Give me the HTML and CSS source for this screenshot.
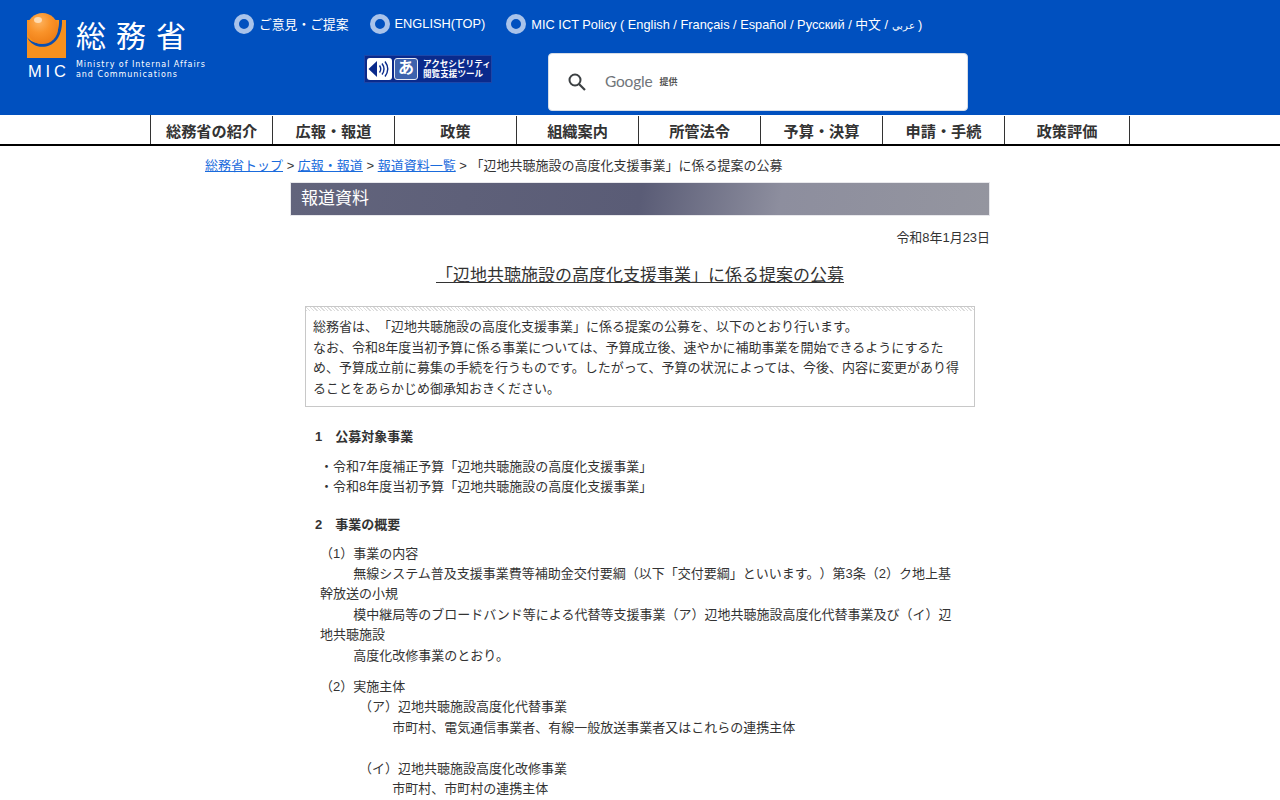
FILE: index.html
```html
<!DOCTYPE html>
<html lang="ja">
<head>
<meta charset="utf-8">
<title>総務省</title>
<link rel="stylesheet" href="styles.css">
</head>
<body>
<header class="site-header">
  <a class="logo" href="#">
    <svg class="logo-mark" width="40" height="46" viewBox="0 0 40 46">
      <defs>
        <radialGradient id="ball" cx="0.4" cy="0.28" r="0.8">
          <stop offset="0" stop-color="#fdb35f"/>
          <stop offset="0.45" stop-color="#f9932a"/>
          <stop offset="1" stop-color="#ec7a12"/>
        </radialGradient>
      </defs>
      <rect x="0" y="7" width="39" height="38" fill="#f7911e"/>
      <path d="M0 24C7 40 36 38 35 7L32 7C33 32 9 36 0 24Z" fill="#0b4fb0"/>
      <circle cx="15.500" cy="15.500" r="15.500" fill="url(#ball)"/>
      <ellipse cx="11" cy="7" rx="4" ry="3" fill="#ffe6c8" opacity="0.8"/>
    </svg>
    <span class="logo-kanji">総務省</span>
    <span class="logo-mic">MIC</span>
    <span class="logo-en">Ministry of Internal Affairs<br>and Communications</span>
  </a>
  <div class="header-right">
    <ul class="top-links">
      <li><a href="#"><span>ご意見・ご提案</span></a></li>
      <li><a href="#"><span>ENGLISH(TOP)</span></a></li>
      <li><a href="#"><span>MIC ICT Policy ( English / Français / Español / Русский / 中文 / <span class="arabic">عربي</span> )</span></a></li>
    </ul>
    <div class="tools">
      <a class="a11y" href="#">
        <svg class="a11y-icon" width="25" height="22" viewBox="0 0 25 22">
          <rect width="25" height="22" rx="3" fill="#fff"/>
          <path d="M1.500 11L10 3v16z" fill="#0a2a8c"/>
          <path d="M12.500 7.500q2.500 3.500 0 7M15 5.500q4 5.500 0 11M18 3.500q5.500 7.500 0 15" fill="none" stroke="#0a2a8c" stroke-width="1.400"/>
        </svg>
        <span class="a11y-kana">あ</span>
        <span class="a11y-text">アクセシビリティ<br>閲覧支援ツール</span>
      </a>
      <div class="search">
        <svg class="search-icon" width="20" height="20" viewBox="0 0 20 20">
          <circle cx="8" cy="8" r="5.500" fill="none" stroke="#3c4043" stroke-width="2"/>
          <path d="M12 12l6 6" stroke="#3c4043" stroke-width="2.200"/>
        </svg>
        <span class="google">Google</span>
        <span class="provided">提供</span>
      </div>
    </div>
  </div>
</header>
<nav class="global-nav">
  <ul class="nav-list">
    <li>総務省の紹介</li>
    <li>広報・報道</li>
    <li>政策</li>
    <li>組織案内</li>
    <li>所管法令</li>
    <li>予算・決算</li>
    <li>申請・手続</li>
    <li class="nav-last">政策評価</li>
  </ul>
</nav>
<p class="breadcrumb"><a href="#">総務省トップ</a> &gt; <a href="#">広報・報道</a> &gt; <a href="#">報道資料一覧</a> &gt; 「辺地共聴施設の高度化支援事業」に係る提案の公募</p>
<main class="main">
  <h1 class="band">報道資料</h1>
  <p class="date">令和8年1月23日</p>
  <h2 class="title">「辺地共聴施設の高度化支援事業」に係る提案の公募</h2>
  <div class="lead">
    <p>総務省は、「辺地共聴施設の高度化支援事業」に係る提案の公募を、以下のとおり行います。<br>なお、令和8年度当初予算に係る事業については、予算成立後、速やかに補助事業を開始できるようにするため、予算成立前に募集の手続を行うものです。したがって、予算の状況によっては、今後、内容に変更があり得ることをあらかじめ御承知おきください。</p>
  </div>
  <h3 class="section">1　公募対象事業</h3>
  <p class="body">・令和7年度補正予算「辺地共聴施設の高度化支援事業」<br>・令和8年度当初予算「辺地共聴施設の高度化支援事業」</p>
  <h3 class="section">2　事業の概要</h3>
  <p class="body body-tight">（1）事業の内容<br>　　&nbsp;&nbsp;無線システム普及支援事業費等補助金交付要綱（以下「交付要綱」といいます。）第3条（2）ク地上基幹放送の小規<br>　　&nbsp;&nbsp;模中継局等のブロードバンド等による代替等支援事業（ア）辺地共聴施設高度化代替事業及び（イ）辺地共聴施設<br>　　&nbsp;&nbsp;高度化改修事業のとおり。</p>
  <p class="body">（2）実施主体</p>
  <p class="body sub">（ア）辺地共聴施設高度化代替事業<br>　　&nbsp;&nbsp;市町村、電気通信事業者、有線一般放送事業者又はこれらの連携主体<br><br>（イ）辺地共聴施設高度化改修事業<br>　　&nbsp;&nbsp;市町村、市町村の連携主体</p>
</main>
</body>
</html>
```
FILE: styles.css
```css
html, body { margin: 0; padding: 0; }
body {
  font-family: "Liberation Sans", "Noto Sans CJK JP", sans-serif;
  font-size: 13px;
  color: #333;
  background: #fff;
  overflow: hidden;
  height: 800px;
  text-spacing-trim: space-all;
}
a { color: inherit; }
p, h1, h2, h3, ul { margin: 0; padding: 0; }
ul { list-style: none; }

.site-header {
  height: 115px;
  background: #0050bf;
  display: flex;
  color: #fff;
}
.logo {
  position: relative;
  display: block;
  width: 234px;
  flex: none;
  text-decoration: none;
}
.logo-mark { position: absolute; left: 27px; top: 13px; }
.logo-kanji {
  position: absolute; left: 76px; top: 18px;
  font-size: 30px; line-height: 38px; letter-spacing: 10px; font-weight: 400;
  white-space: nowrap;
}
.logo-mic {
  position: absolute; left: 28px; top: 62px;
  font-size: 16.5px; line-height: 18px; letter-spacing: 3.8px; font-weight: 400;
}
.logo-en {
  position: absolute; left: 76px; top: 60px;
  font-family: "DejaVu Sans", sans-serif;
  font-size: 8px; line-height: 10px; letter-spacing: 0.95px; white-space: nowrap;
}
.header-right { flex: 1; }
.top-links {
  display: flex;
  gap: 21px;
  padding-top: 13px;
  height: 20px;
  font-size: 12.8px;
}
.top-links a {
  display: flex;
  align-items: center;
  gap: 5px;
  height: 20px;
  text-decoration: none;
  white-space: pre;
}
.top-links a::before {
  content: "";
  width: 10px; height: 10px;
  border: 5px solid #a9c3ea;
  border-radius: 50%;
  flex: none;
  transform: translateY(1px);
}
.arabic { font-size: 9.5px; }
.tools {
  display: flex;
  margin-top: 20px;
  padding-left: 130px;
  align-items: flex-start;
}
.a11y {
  margin-top: 2px;
  width: 128px; height: 28px;
  box-sizing: border-box;
  background: #0a2a8c;
  border: 1px solid #1d46a8;
  display: flex; align-items: center;
  padding-left: 2px; gap: 2px;
  text-decoration: none;
}
.a11y-icon { flex: none; }
.a11y-kana {
  width: 24px; height: 22px;
  box-sizing: border-box;
  background: #3e62ad; color: #fff;
  border: 1px solid #e6ebf5;
  border-radius: 3px;
  font-size: 16px; line-height: 18px; font-weight: 700; text-align: center;
}
.a11y-text {
  font-size: 8.6px; line-height: 10px; font-weight: 700; white-space: nowrap; margin-left: 3px;
}
.search {
  margin-left: 56px;
  width: 420px; height: 58px;
  background: #fff;
  border-radius: 4px;
  border: 1px solid #d5dce6;
  box-sizing: border-box;
  display: flex; align-items: center;
  padding-left: 18px;
  color: #70757a;
}
.search-icon { flex: none; }
.google { margin: 0 0 2px 18px; font-family: "Lato", sans-serif; font-size: 15.5px; letter-spacing: -0.2px; }
.provided { margin: 0 0 1px 7px; font-size: 9px; color: #555; font-weight: 700; }

.global-nav { height: 29px; border-bottom: 2px solid #000; }
.nav-list {
  width: 980px; margin: 0 auto; height: 29px;
  display: flex;
  padding-top: 1px;
  box-sizing: border-box;
  border-left: 1px solid #333;
}
.nav-list li {
  width: 122px;
  box-sizing: border-box;
  flex: none;
  border-right: 1px solid #333;
  text-align: center;
  font-size: 15.2px; font-weight: 700; line-height: 31px;
  color: #333;
}
.nav-list .nav-last { width: 125px; }

.breadcrumb {
  margin: 12px 0 0 205px;
  line-height: 16px;
  white-space: nowrap;
}
.breadcrumb a { color: #1a6bdc; }

.main { width: 700px; margin: 8px auto 0; }
.band {
  height: 34px; box-sizing: border-box;
  border: 1px solid #e8e8ec;
  background: linear-gradient(100deg, #62647c 0%, #5a5c76 50%, #8d8e9e 70%, #94959f 100%);
  color: #fff;
  font-size: 17px; font-weight: 400; line-height: 31px;
  padding-left: 10px;
}
.date { text-align: right; margin-top: 13px; line-height: 18px; font-size: 12.96px; }
.title {
  margin-top: 16px;
  text-align: center;
  font-size: 17px; font-weight: 400; line-height: 26px;
  text-decoration: underline;
}
.lead {
  margin: 17px 15px 0;
  border: 1px solid #c8c8c8;
  padding: 10px 7px 6px;
  line-height: 20.67px;
  background: repeating-linear-gradient(45deg, #dcdcdc 0 1px, #fff 1px 2.500px) no-repeat top / 100% 4px;
}
.section { margin: 18px 0 0 25px; font-size: 13px; font-weight: 700; line-height: 18px; }
.lead + .section { margin-top: 21px; }
.body { margin: 11px 30px 0; line-height: 20.4px; }
.body-tight { margin-top: 10px; }
.body + .sub { margin-top: 0; padding-left: 39px; }
```
